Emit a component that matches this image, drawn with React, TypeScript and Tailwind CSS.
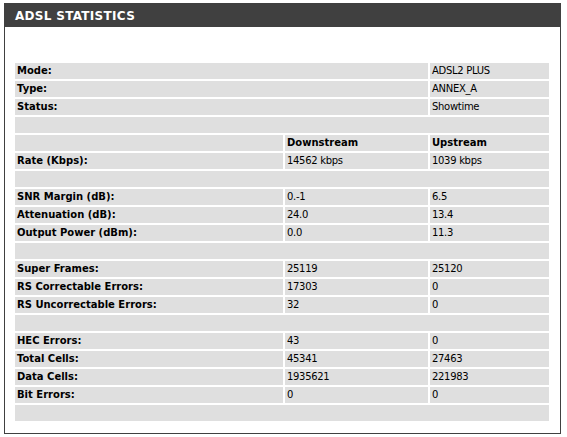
import React from "react";

type Row =
  | { kind: "blank" }
  | { kind: "info"; label: string; value: string }
  | { kind: "head" }
  | { kind: "data"; label: string; down: string; up: string };

const rows: Row[] = [
  { kind: "info", label: "Mode:", value: "ADSL2 PLUS" },
  { kind: "info", label: "Type:", value: "ANNEX_A" },
  { kind: "info", label: "Status:", value: "Showtime" },
  { kind: "blank" },
  { kind: "head" },
  { kind: "data", label: "Rate (Kbps):", down: "14562 kbps", up: "1039 kbps" },
  { kind: "blank" },
  { kind: "data", label: "SNR Margin (dB):", down: "0.-1", up: "6.5" },
  { kind: "data", label: "Attenuation (dB):", down: "24.0", up: "13.4" },
  { kind: "data", label: "Output Power (dBm):", down: "0.0", up: "11.3" },
  { kind: "blank" },
  { kind: "data", label: "Super Frames:", down: "25119", up: "25120" },
  { kind: "data", label: "RS Correctable Errors:", down: "17303", up: "0" },
  { kind: "data", label: "RS Uncorrectable Errors:", down: "32", up: "0" },
  { kind: "blank" },
  { kind: "data", label: "HEC Errors:", down: "43", up: "0" },
  { kind: "data", label: "Total Cells:", down: "45341", up: "27463" },
  { kind: "data", label: "Data Cells:", down: "1935621", up: "221983" },
  { kind: "data", label: "Bit Errors:", down: "0", up: "0" },
  { kind: "blank" },
];

const cell = "h-[16px] bg-[#dfdfdf] pl-[2px] leading-[16px] whitespace-nowrap overflow-hidden";
const bold = "font-bold text-[10px] text-black";
const reg = "text-[10px] tracking-[-0.3px] text-black";

export default function App() {
  return (
    <div
      className="w-[567px] h-[437px] bg-white pt-[3px] pl-[4px]"
      style={{ fontFamily: '"DejaVu Sans", Verdana, sans-serif' }}
    >
      <div className="w-[557px] h-[431px] flex flex-col border-l border-r border-b border-[#404040] box-border">
        <div className="-mx-px h-[24px] bg-[#404040] pl-[11px] pt-[2px] leading-[22px] text-white font-bold text-[12px] tracking-[0.3px]">
          ADSL STATISTICS
        </div>
        <div className="pt-[36px] pl-[10px]">
          <div className="grid grid-cols-[268px_143px_119px] gap-[2px]">
            {rows.map((r, i) => {
              if (r.kind === "blank")
                return <div key={i} className={`${cell} col-span-3`} />;
              if (r.kind === "info")
                return (
                  <React.Fragment key={i}>
                    <div className={`${cell} col-span-2 ${bold}`}>{r.label}</div>
                    <div className={`${cell} ${reg}`}>{r.value}</div>
                  </React.Fragment>
                );
              if (r.kind === "head")
                return (
                  <React.Fragment key={i}>
                    <div className={cell} />
                    <div className={`${cell} ${bold}`}>Downstream</div>
                    <div className={`${cell} ${bold}`}>Upstream</div>
                  </React.Fragment>
                );
              return (
                <React.Fragment key={i}>
                  <div className={`${cell} ${bold}`}>{r.label}</div>
                  <div className={`${cell} ${reg}`}>{r.down}</div>
                  <div className={`${cell} ${reg}`}>{r.up}</div>
                </React.Fragment>
              );
            })}
          </div>
        </div>
      </div>
    </div>
  );
}
